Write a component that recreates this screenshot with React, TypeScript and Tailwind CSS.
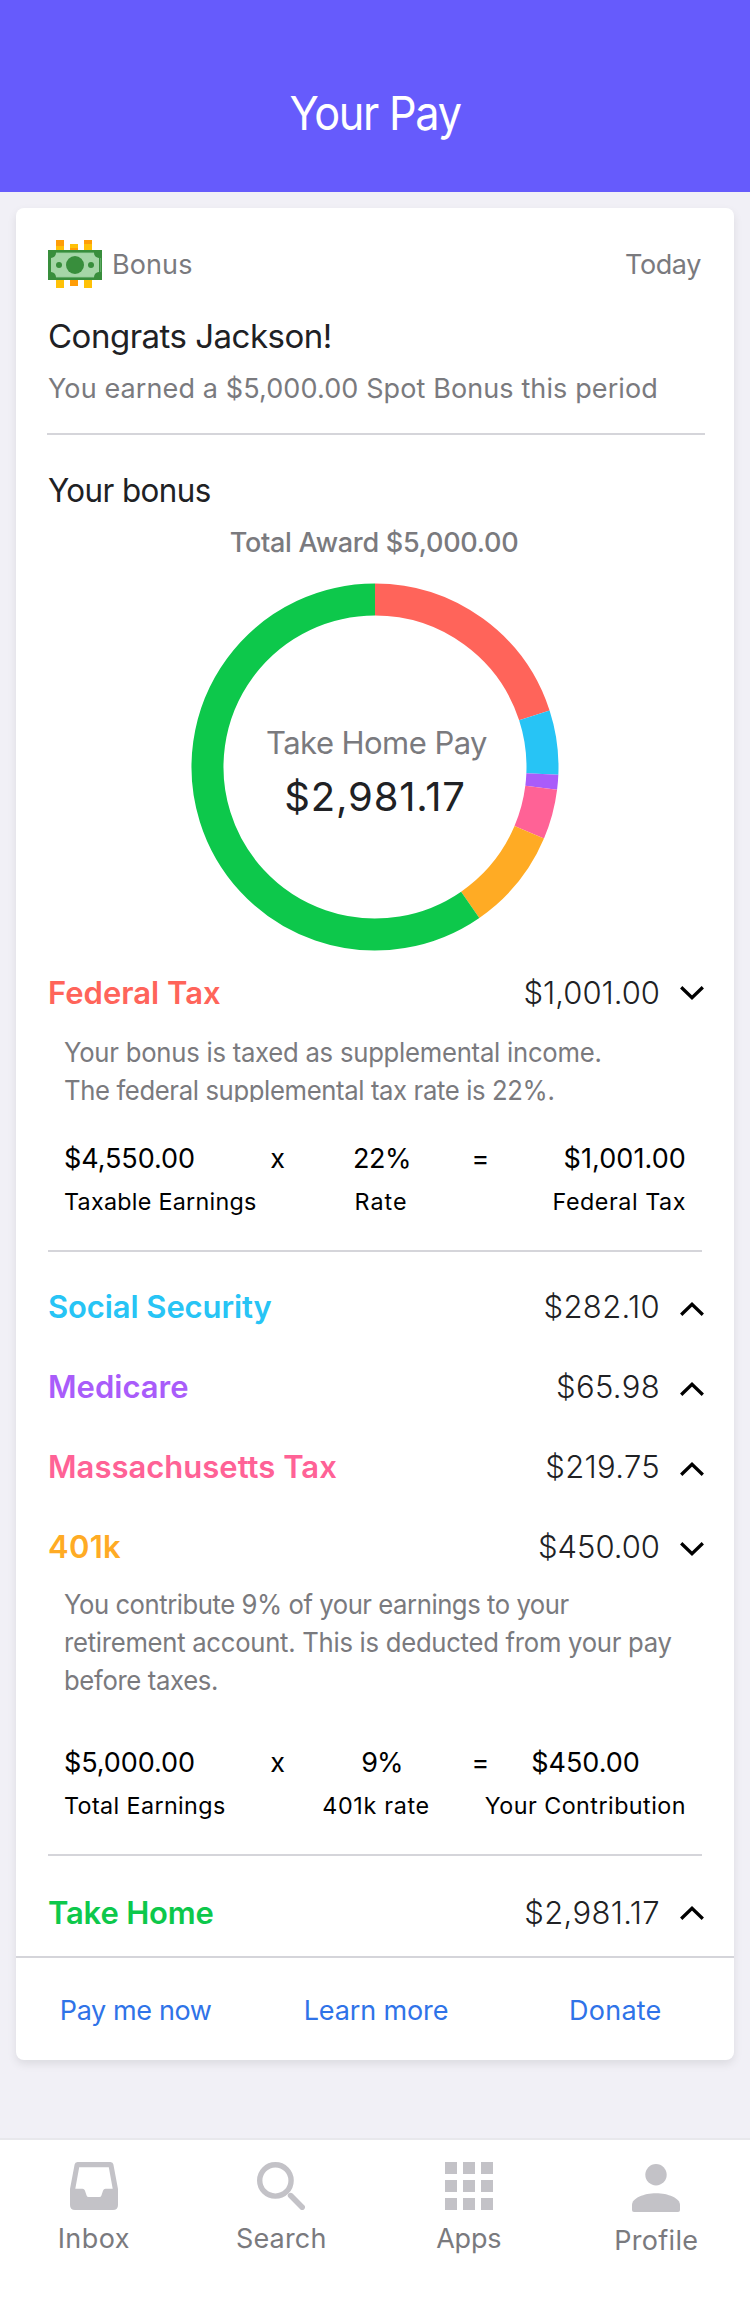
import React from "react";

type Slice = { name: string; value: number; color: string };

const slices: Slice[] = [
  { name: "Federal Tax", value: 1001, color: "#ff645a" },
  { name: "Social Security", value: 282.1, color: "#27c4f5" },
  { name: "Medicare", value: 65.98, color: "#a95cfa" },
  { name: "Massachusetts Tax", value: 219.75, color: "#ff6296" },
  { name: "401k", value: 450, color: "#ffab24" },
  { name: "Take Home", value: 2981.17, color: "#0dc84b" },
];

function Donut() {
  const total = slices.reduce((sum, s) => sum + s.value, 0);
  const r = 167.5;
  const point = (f: number) => {
    const a = f * 2 * Math.PI;
    return `${184 + r * Math.sin(a)} ${184 - r * Math.cos(a)}`;
  };
  let acc = 0;
  return (
    <svg viewBox="0 0 368 368" className="block h-[368px] w-[368px]" fill="none">
      {slices.map((s) => {
        const from = acc / total;
        acc += s.value;
        const to = acc / total;
        return (
          <path
            key={s.name}
            d={`M${point(from)}A${r} ${r} 0 ${to - from > 0.5 ? 1 : 0} 1 ${point(to)}`}
            stroke={s.color}
            strokeWidth="32"
          />
        );
      })}
    </svg>
  );
}

function MoneyIcon() {
  return (
    <svg viewBox="0 0 54 48" className="block h-12 w-[54px]">
      <path fill="#ff9d07" d="M8 0h8v6H8zM22 8h8v2h-8zM36 0h8v4h-8zM22 40h8v6h-8z" />
      <path fill="#ffc107" d="M8 6h8v4H8zM22 4h8v4h-8zM36 4h8v6h-8zM8 40h8v8H8zM36 40h8v8h-8z" />
      <path fill="#388e3c" d="M0 10h54v30H0z" />
      <path
        fill="#a5d6a7"
        d="M8 13h38a5.500 5.500 0 0 0 5 5v14a5.500 5.500 0 0 0-5 5H8a5.500 5.500 0 0 0-5-5V18a5.500 5.500 0 0 0 5-5z"
      />
      <path stroke="#6fb573" strokeWidth="0.8" d="M8 12.600h38M8 37.400h38M52.600 18v14" />
      <circle cx="27" cy="25" r="9" fill="#388e3c" />
      <circle cx="11" cy="25" r="3" fill="#388e3c" />
      <circle cx="43" cy="25" r="3" fill="#388e3c" />
    </svg>
  );
}

function Chevron({ open }: { open?: boolean }) {
  return (
    <svg viewBox="0 0 24 14" className="block h-[14px] w-6" fill="none" stroke="#000" strokeWidth="3.300">
      <path d={open ? "M1.200 1.300L12 11.700L22.800 1.300" : "M1.200 12.700L12 2.300L22.800 12.700"} />
    </svg>
  );
}

function Row(props: {
  label: string;
  labelClass: string;
  amount: string;
  amountClass: string;
  open?: boolean;
  chevronClass?: string;
}) {
  return (
    <div className="-mr-[2px] flex h-10 items-center text-[31px] leading-10">
      <span className={`flex-1 font-semibold ${props.labelClass}`}>{props.label}</span>
      <span className={`mr-[20px] font-light text-[#202124] ${props.amountClass}`}>{props.amount}</span>
      <span className={props.chevronClass}>
        <Chevron open={props.open} />
      </span>
    </div>
  );
}

function InboxIcon() {
  return (
    <svg viewBox="0 0 48 48" className="h-12 w-12" fill="#c3c2c7">
      <path
        fillRule="evenodd"
        d="M7.500 0H40.500Q43 0 43.400 2.500L48 27V43Q48 48 43 48H5Q0 48 0 43V27L4.600 2.500Q5 0 7.500 0ZM9.200 5.200L5.300 26.800H12.500Q14.300 26.800 14.900 28.500L16.600 33.500Q17.100 35 18.600 35H29.400Q30.900 35 31.400 33.500L33.100 28.500Q33.700 26.800 35.500 26.800H42.700L38.800 5.200Z"
      />
    </svg>
  );
}

function SearchIcon() {
  return (
    <svg viewBox="0 0 48 48" className="h-12 w-12" fill="none" stroke="#c3c2c7">
      <circle cx="18.400" cy="18.400" r="15.700" strokeWidth="5.400" />
      <path d="M33.600 33.600L45.200 45.200" strokeWidth="5.600" strokeLinecap="round" />
    </svg>
  );
}

function AppsIcon() {
  return (
    <svg viewBox="0 0 48 48" className="h-12 w-12" fill="#c3c2c7" shapeRendering="crispEdges">
      <path d="M0 0h12v12H0zM18 0h12v12H18zM36 0h12v12H36zM0 18h12v12H0zM18 18h12v12H18zM36 18h12v12H36zM0 36h12v12H0zM18 36h12v12H18zM36 36h12v12H36z" />
    </svg>
  );
}

function ProfileIcon() {
  return (
    <svg viewBox="0 0 48 48" className="h-12 w-12" fill="#c3c2c7">
      <circle cx="24" cy="10.700" r="10.700" />
      <path d="M0 41C0 34 12 29.200 24 29.200S48 34 48 41V46Q48 48 46 48H2Q0 48 0 46Z" />
    </svg>
  );
}

function Tab({ icon, label, className }: { icon: React.ReactNode; label: string; className: string }) {
  return (
    <div className={`flex flex-col items-center gap-[10px] ${className}`}>
      {icon}
      <span className="leading-[38px]">{label}</span>
    </div>
  );
}

const valueRow = "ml-4 grid w-[622px] grid-cols-[200px_27px_170px_39px_186px] leading-[38px] text-black";
const labelRow =
  "ml-4 mt-2 grid w-[622px] grid-cols-[200px_27px_170px_39px_186px] text-[23.3px] leading-8 text-black whitespace-nowrap";

export default function App() {
  return (
    <div className="flex h-[2314px] w-[750px] flex-col bg-[#f1f0f6] font-['Inter','Liberation_Sans',sans-serif] text-[27px] text-[#7a7a7e]">
      <header className="flex h-48 justify-center bg-[#665bfc] pt-[83px] text-[47px] leading-[60px] text-white">
        <h1 className="scale-x-[0.92] tracking-[-1.4px]">Your Pay</h1>
      </header>

      <main className="mx-4 mt-4 flex h-[1852px] flex-col rounded-lg bg-white shadow-[0_4px_10px_rgba(0,0,0,0.09)]">
        <section className="flex flex-col px-8 pt-8">
          <div className="flex h-12 items-center">
            <MoneyIcon />
            <span className="ml-[10px] flex-1 pt-[2px] tracking-[0.1px]">Bonus</span>
            <span className="pt-[2px] pr-px tracking-[-0.4px]">Today</span>
          </div>
          <h2 className="mt-[26px] text-[33px] leading-[44px] tracking-[-0.5px] text-[#202124]">Congrats Jackson!</h2>
          <p className="mt-[12px] leading-[38px] tracking-[0.11px]">You earned a $5,000.00 Spot Bonus this period</p>
          <div className="-mr-[3px] -ml-px mt-[25px] h-[2px] bg-[#d5d5da]" />

          <h2 className="mt-[33px] origin-left scale-x-[0.95] text-[33px] leading-[44px] tracking-[-0.6px] text-[#202124]">
            Your bonus
          </h2>
          <p className="mt-[12px] pr-[2px] text-center font-medium leading-[38px] tracking-[-0.26px]">
            Total Award $5,000.00
          </p>
          <div className="relative mt-[21px] self-center">
            <Donut />
            <div className="absolute inset-0 flex flex-col items-center pt-[140px]">
              <span className="pl-[3px] text-[31px] leading-10 tracking-[-0.55px]">Take Home Pay</span>
              <span className="mt-[10px] text-[40px] leading-[48px] tracking-[0.8px] text-[#202124]">$2,981.17</span>
            </div>
          </div>

          <div className="mt-[22px]">
            <Row label="Federal Tax" labelClass="text-[#ff645a]" amount="$1,001.00" amountClass="" open />
          </div>
          <p className="mt-[21px] ml-4 h-[68px] origin-left scale-x-[0.95] overflow-hidden leading-[38px] whitespace-nowrap">
            <span className="block tracking-[-0.25px]">Your bonus is taxed as supplemental income.</span>
            <span className="block tracking-[-0.38px]">The federal supplemental tax rate is 22%.</span>
          </p>
          <div className={`mt-[38px] ${valueRow}`}>
            <span className="tracking-[-0.08px]">$4,550.00</span>
            <span className="text-center">x</span>
            <span className="pl-3 text-center tracking-[-0.5px]">22%</span>
            <span className="text-center">=</span>
            <span className="text-right tracking-[0.1px]">$1,001.00</span>
          </div>
          <div className={labelRow}>
            <span className="tracking-[0.27px]">Taxable Earnings</span>
            <span />
            <span className="pl-[10px] text-center tracking-[1px]">Rate</span>
            <span />
            <span className="text-right tracking-[0.55px]">Federal Tax</span>
          </div>
          <div className="mt-[32px] h-[2px] bg-[#d5d5da]" />

          <div className="mt-[35px] flex flex-col gap-10">
            <Row
              label="Social Security"
              labelClass="text-[#27c4f5] tracking-[-0.09px]"
              amount="$282.10"
              amountClass="tracking-[0.35px]"
              chevronClass="mt-1"
            />
            <Row
              label="Medicare"
              labelClass="text-[#a95cfa]"
              amount="$65.98"
              amountClass="tracking-[0.35px]"
              chevronClass="mt-1"
            />
            <Row
              label="Massachusetts Tax"
              labelClass="text-[#ff6296]"
              amount="$219.75"
              amountClass="tracking-[0.33px]"
              chevronClass="mt-1"
            />
            <Row
              label="401k"
              labelClass="text-[#ffab24] tracking-[0.27px]"
              amount="$450.00"
              amountClass=""
              chevronClass="mt-1"
              open
            />
          </div>
          <p className="mt-[19px] ml-4 origin-left scale-x-[0.95] leading-[38px] whitespace-nowrap">
            <span className="block tracking-[-0.47px]">You contribute 9% of your earnings to your</span>
            <span className="block tracking-[-0.28px]">retirement account. This is deducted from your pay</span>
            <span className="block tracking-[-0.35px]">before taxes.</span>
          </p>
          <div className={`mt-[44px] ${valueRow}`}>
            <span className="tracking-[-0.08px]">$5,000.00</span>
            <span className="text-center">x</span>
            <span className="pl-3 text-center tracking-[-1px]">9%</span>
            <span className="text-center">=</span>
            <span className="pr-[15px] text-center">$450.00</span>
          </div>
          <div className={labelRow}>
            <span className="tracking-[0.39px]">Total Earnings</span>
            <span />
            <span className="text-center tracking-[0.7px]">401k rate</span>
            <span />
            <span className="flex justify-end tracking-[0.47px]">Your Contribution</span>
          </div>
          <div className="mt-[32px] h-[2px] bg-[#d5d5da]" />

          <div className="mt-[37px]">
            <Row
              label="Take Home"
              labelClass="text-[#0dc84b] tracking-[-0.19px]"
              amount="$2,981.17"
              amountClass="tracking-[0.35px]"
            />
          </div>
        </section>

        <div className="mt-[23px] grid grid-cols-3 border-t-2 border-[#d5d5da] pt-[34px] text-center leading-[38px] text-[#2f73e8]">
          <a className="tracking-[-0.38px]">Pay me now</a>
          <a className="pl-[2px] tracking-[-0.12px]">Learn more</a>
          <a className="pl-[2px] tracking-[0.23px]">Donate</a>
        </div>
      </main>

      <nav className="mt-auto grid h-[176px] grid-cols-4 border-t-2 border-[#e8e8ec] bg-white">
        <Tab icon={<InboxIcon />} label="Inbox" className="pt-[22px] tracking-[0.42px]" />
        <Tab icon={<SearchIcon />} label="Search" className="pt-[22px] tracking-[0.17px]" />
        <Tab icon={<AppsIcon />} label="Apps" className="pt-[22px] tracking-[-0.2px]" />
        <Tab icon={<ProfileIcon />} label="Profile" className="pt-6 tracking-[0.3px]" />
      </nav>
    </div>
  );
}
